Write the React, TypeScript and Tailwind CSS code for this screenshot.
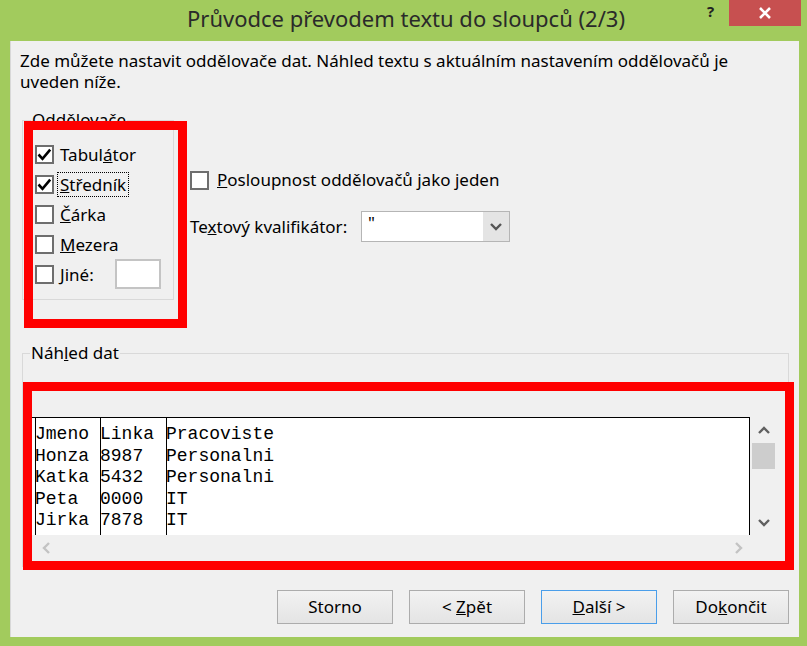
import type { ReactNode } from 'react';

const rows = [
  ['Jmeno', 'Linka', 'Pracoviste'],
  ['Honza', '8987', 'Personalni'],
  ['Katka', '5432', 'Personalni'],
  ['Peta', '0000', 'IT'],
  ['Jirka', '7878', 'IT'],
];

function CheckBox({ checked }: { checked?: boolean }) {
  return (
    <span className="flex h-[19px] w-[19px] shrink-0 items-center justify-center border-2 border-[#6e6e6e] bg-white">
      {checked && (
        <svg width="15" height="15" viewBox="0 0 15 15">
          <path d="M1.5 7.5 L5.5 11.8 L13.2 2.6" fill="none" stroke="#000" strokeWidth="2.6" />
        </svg>
      )}
    </span>
  );
}

function Chevron({ dir, color }: { dir: 'up' | 'down' | 'left' | 'right'; color: string }) {
  const d = {
    up: 'M1 7 L6 2 L11 7',
    down: 'M1 2 L6 7 L11 2',
    left: 'M7 1 L2 6 L7 11',
    right: 'M2 1 L7 6 L2 11',
  }[dir];
  const vertical = dir === 'up' || dir === 'down';
  return (
    <svg width={vertical ? 12 : 9} height={vertical ? 9 : 12} viewBox={vertical ? '0 0 12 9' : '0 0 9 12'}>
      <path d={d} fill="none" stroke={color} strokeWidth="2.4" />
    </svg>
  );
}

function Option({ checked, focus, children }: { checked?: boolean; focus?: boolean; children: ReactNode }) {
  return (
    <div className="flex h-[30px] items-center">
      <CheckBox checked={checked} />
      <span
        className={`ml-[3px] px-[2px] leading-[23px] border ${focus ? 'border-dotted border-black' : 'border-transparent'}`}
      >
        {children}
      </span>
    </div>
  );
}

function Button({ children, primary }: { children: ReactNode; primary?: boolean }) {
  return (
    <button
      className={`h-[34px] w-[116px] border bg-gradient-to-b from-[#f2f2f2] to-[#e4e4e4] text-[17px] text-black ${
        primary ? 'border-[#4a9eea]' : 'border-[#acacac]'
      }`}
    >
      {children}
    </button>
  );
}

export default function App() {
  return (
    <div className="flex h-[646px] w-[807px] flex-col bg-[#a2cb5d] font-['Noto_Sans',sans-serif] text-[17px] text-black">
      {/* title bar */}
      <div className="flex h-[41px] items-start">
        <div className="flex-1 pl-[105px] pt-[4px] text-center text-[22px] leading-[28px] text-[#2a2a2a]">
          Průvodce převodem textu do sloupců (2/3)
        </div>
        <div className="w-[22px] pt-[1px] text-[15px] font-bold leading-[20px] text-[#222]">?</div>
        <div className="mr-[6px] flex h-[26px] w-[72px] items-center justify-center bg-[#c75050]">
          <svg width="14" height="12" viewBox="0 0 14 12">
            <path d="M2 1 L12 11 M12 1 L2 11" stroke="#fff" strokeWidth="2.6" />
          </svg>
        </div>
      </div>

      {/* dialog body */}
      <div className="relative ml-[10px] flex h-[596px] w-[789px] flex-col border-l border-[#d8d8d8] bg-[#f0f0f0]">
        <p className="ml-[9px] mt-[9px] leading-[21px]">
          Zde můžete nastavit oddělovače dat. Náhled textu s aktuálním nastavením oddělovačů je
          <br />
          uveden níže.
        </p>

        <div className="mt-[18px] flex">
          <fieldset className="ml-[11px] w-[152px] border border-[#d9d9d9]">
            <legend className="ml-[8px] px-[1px] leading-[20px]">Oddělovače</legend>
            <div className="pb-[10px] pl-[12px] pt-[9px]">
              <Option checked>
                Tabul<u>á</u>tor
              </Option>
              <Option checked focus>
                <u>S</u>tředník
              </Option>
              <Option>
                <u>Č</u>árka
              </Option>
              <Option>
                <u>M</u>ezera
              </Option>
              <div className="flex h-[30px] items-center">
                <CheckBox />
                <span className="ml-[3px] w-[58px] border border-transparent px-[2px] leading-[23px]">
                  <u>J</u>iné:
                </span>
                <span className="h-[30px] w-[46px] border-2 border-[#c4c4c4] bg-white" />
              </div>
            </div>
          </fieldset>

          <div className="ml-[16px] flex flex-col">
            <div className="mt-[55px] flex h-[30px] items-center">
              <CheckBox />
              <span className="ml-[8px]">
                <u>P</u>osloupnost oddělovačů jako jeden
              </span>
            </div>
            <div className="mt-[16px] flex h-[31px] items-center">
              <span className="w-[171px]">
                Te<u>x</u>tový kvalifikátor:
              </span>
              <div className="flex h-[31px] w-[149px] border border-[#b5b5b5] bg-white">
                <span className="flex-1 pl-[6px] leading-[22px]">"</span>
                <span className="flex w-[26px] items-center justify-center bg-[#e4e4e4]">
                  <Chevron dir="down" color="#555" />
                </span>
              </div>
            </div>
          </div>
        </div>

        <fieldset className="ml-[11px] mt-[43px] w-[767px] border border-[#d9d9d9]">
          <legend className="ml-[7px] px-[1px] leading-[20px]">
            Náh<u>l</u>ed dat
          </legend>
          <div className="pb-[6px] pl-[9px] pt-[54px]">
            <div className="flex h-[143px] w-[745px] flex-col">
              <div className="flex h-[118px]">
                <div className="flex w-[718px] border-r border-t border-black bg-white pl-[3px] font-['Liberation_Mono',monospace] text-[18px] leading-[21.5px]">
                  {[0, 1, 2].map((c) => (
                    <div
                      key={c}
                      className={`border-l border-black pt-[6px] ${c === 0 ? 'w-[65px]' : c === 1 ? 'w-[66px]' : 'flex-1'}`}
                    >
                      {rows.map((r, i) => (
                        <div key={i} className="-ml-[1px] whitespace-pre">
                          {r[c]}
                        </div>
                      ))}
                    </div>
                  ))}
                </div>
                <div className="flex w-[27px] flex-col">
                  <div className="flex h-[26px] items-center justify-center">
                    <Chevron dir="up" color="#606060" />
                  </div>
                  <div className="ml-[2px] h-[26px] w-[23px] bg-[#cdcdcd]" />
                  <div className="flex-1" />
                  <div className="flex h-[26px] items-center justify-center">
                    <Chevron dir="down" color="#606060" />
                  </div>
                </div>
              </div>
              <div className="flex h-[25px] w-[718px] items-center justify-between">
                <span className="flex w-[28px] justify-center">
                  <Chevron dir="left" color="#c3c3c3" />
                </span>
                <span className="flex w-[24px] justify-center">
                  <Chevron dir="right" color="#c3c3c3" />
                </span>
              </div>
            </div>
          </div>
        </fieldset>

        <div className="mr-[10px] mt-[23px] flex justify-end gap-[16px]">
          <Button>Storno</Button>
          <Button>
            &lt; <u>Z</u>pět
          </Button>
          <Button primary>
            <u>D</u>alší &gt;
          </Button>
          <Button>
            Do<u>k</u>ončit
          </Button>
        </div>

        {/* red annotation frames */}
        <div className="pointer-events-none absolute left-[13px] top-[80px] h-[207px] w-[163px] border-[9px] border-[#ff0000]" />
        <div className="pointer-events-none absolute left-[12px] top-[341px] h-[188px] w-[771px] border-[9px] border-[#ff0000]" />
      </div>
    </div>
  );
}
